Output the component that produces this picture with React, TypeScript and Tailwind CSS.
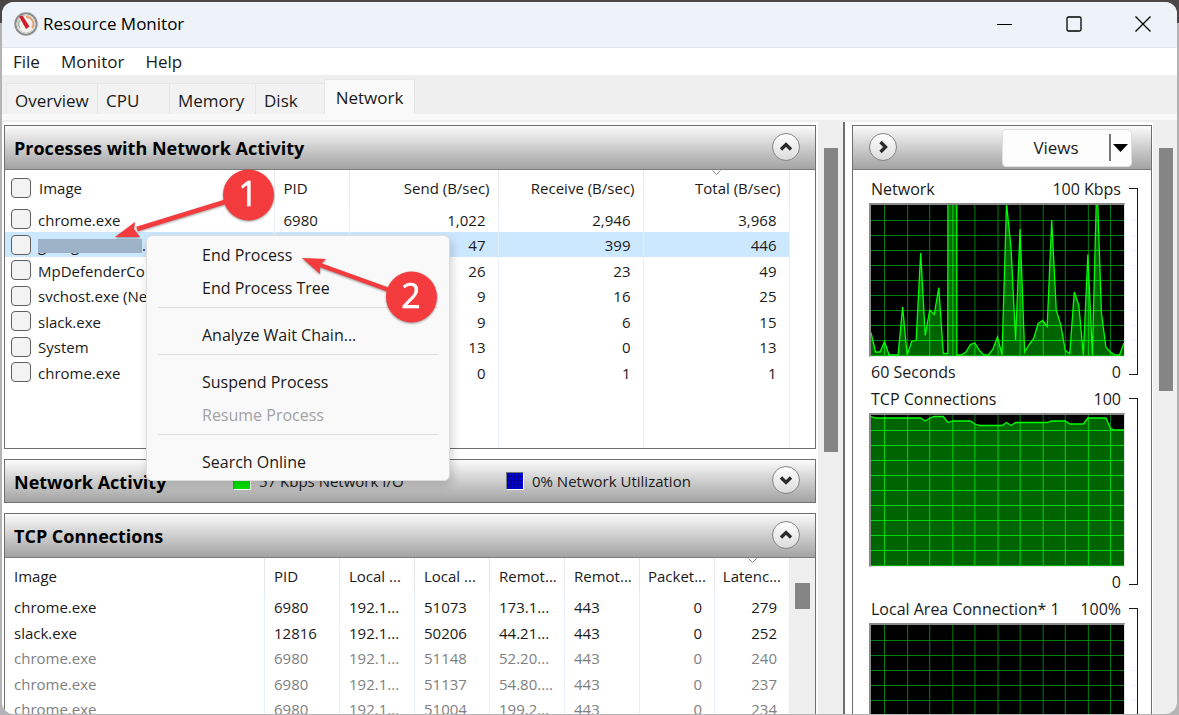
import React from 'react';
import { ChevronDown, ChevronRight, ChevronUp } from 'lucide-react';
import clsx from 'clsx';

const processes = [
  { name: 'chrome.exe', pid: '6980', send: '1,022', receive: '2,946', total: '3,968' },
  { name: '', pid: '', send: '47', receive: '399', total: '446', selected: true },
  { name: 'MpDefenderCo', pid: '', send: '26', receive: '23', total: '49' },
  { name: 'svchost.exe (Ne', pid: '', send: '9', receive: '16', total: '25' },
  { name: 'slack.exe', pid: '', send: '9', receive: '6', total: '15' },
  { name: 'System', pid: '', send: '13', receive: '0', total: '13' },
  { name: 'chrome.exe', pid: '', send: '0', receive: '1', total: '1' },
];

const connections = [
  { cells: ['chrome.exe', '6980', '192.1...', '51073', '173.1...', '443', '0', '279'], active: true },
  { cells: ['slack.exe', '12816', '192.1...', '50206', '44.21...', '443', '0', '252'], active: true },
  { cells: ['chrome.exe', '6980', '192.1...', '51148', '52.20...', '443', '0', '240'], active: false },
  { cells: ['chrome.exe', '6980', '192.1...', '51137', '54.80....', '443', '0', '237'], active: false },
  { cells: ['chrome.exe', '6980', '192.1...', '51004', '199.2...', '443', '0', '234'], active: false },
];

const connectionHeads = ['Image', 'PID', 'Local ...', 'Local ...', 'Remot...', 'Remot...', 'Packet...', 'Latenc...'];

// one sample per second, in percent of the scale
const networkSamples = [
  15, 2, 2, 9, 0, 0, 0, 32, 0, 9, 10, 68, 13, 30, 27, 45, 1, 1, 5000, 0, 0, 2, 7, 8, 3, 0, 0, 4, 12,
  0, 101, 71, 10, 84, 2, 7, 11, 21, 23, 19, 90, 30, 20, 3, 1, 42, 33, 0, 67, 0, 118, 28, 5, 2, 0, 0, 8,
];
const tcpSamples = [
  99, 98, 98, 98, 98, 98, 98, 98, 98, 98, 98, 98, 96, 98, 99, 99, 99, 95, 96, 96, 96, 96, 96, 94, 93,
  93, 93, 93, 93, 93, 95, 93, 95, 95, 95, 95, 95, 95, 95, 95, 96, 96, 96, 96, 94, 94, 94, 94, 98, 98,
  98, 98, 98, 91, 90, 90, 90,
];

const menuGroups = [
  [{ label: 'End Process' }, { label: 'End Process Tree' }],
  [{ label: 'Analyze Wait Chain...' }],
  [{ label: 'Suspend Process' }, { label: 'Resume Process', disabled: true }],
  [{ label: 'Search Online' }],
];

const headerBar = 'flex h-11 items-center bg-linear-to-b from-[#fbfbfb] to-[#a3a3a3] pl-[9px] pr-[15px]';

function RoundButton({ icon: Icon, label }: { icon: any; label: string }) {
  return (
    <button
      aria-label={label}
      className="mb-[2px] flex h-7 w-7 shrink-0 items-center justify-center rounded-full border border-[#858585] bg-linear-to-b from-white to-[#dcdcdc]"
    >
      <Icon className="h-5 w-5 text-[#2b2b2b]" strokeWidth={4} strokeLinecap="butt" strokeLinejoin="miter" />
    </button>
  );
}

function Check({ id, label }: { id: string; label: string }) {
  return (
    <input
      id={id}
      type="checkbox"
      aria-label={label}
      className="h-5 w-5 shrink-0 appearance-none rounded border border-[#5f5f5f] bg-[#f3f3f3]"
    />
  );
}

function SortMark() {
  return (
    <svg className="absolute left-1/2 top-0 -ml-1 h-[6px] w-[9px]" viewBox="0 0 9 6" fill="none" stroke="#8a8a8a">
      <path d="M0.5 0.5L4.5 4.5L8.5 0.5" />
    </svg>
  );
}

// process name with a strip painted over it, only the tails of the letters show
function HiddenName() {
  return (
    <span className="relative flex h-6 w-[108px] items-center justify-between">
      <span>g</span>
      <span>g</span>
      <span className="w-[6px]" />
      <span>s.</span>
      <span className="absolute left-0 top-[6px] h-[14px] w-[104px] bg-[#9fb3c8]" />
    </span>
  );
}

function Plot({ id, samples }: { id: string; samples?: number[] }) {
  const line = samples?.map((v, i) => `${i * 4.5},${150 - v * 1.5}`).join(' ');
  let grid = '';
  for (let i = 0; i < 11; i++) grid += `M${Math.round(13 + i * 22.5) + 0.5} 0V151`;
  for (let i = 1; i < 10; i++) grid += `M0 ${i * 15 + 0.5}H252`;

  return (
    <div className="h-[154px] border-b border-l-2 border-r border-t-2 border-b-[#e3e3e3] border-l-[#8a8a8a] border-r-[#e3e3e3] border-t-[#8a8a8a] bg-black">
      <svg className="block h-full w-full" viewBox="0 0 252 151" preserveAspectRatio="none" fill="none">
        <path d={grid} stroke="#00800f" />
        {line && (
          <>
            <clipPath id={id}>
              <polygon points={`0,151 ${line} 252,151`} />
            </clipPath>
            <polygon points={`0,151 ${line} 252,151`} fill="#006400" />
            <path d={grid} stroke="#00d60c" clipPath={`url(#${id})`} />
            <path d="M0 150.5H252" stroke="#00b40a" />
            <polyline points={line} stroke="#00ff00" strokeWidth="1.3" />
          </>
        )}
      </svg>
    </div>
  );
}

type GraphProps = { id: string; title: string; scale: string; span?: string; samples?: number[] };

function Graph({ id, title, scale, span, samples }: GraphProps) {
  return (
    <section className="flex gap-1 pl-4 pr-[13px]">
      <div className="min-w-0 flex-1">
        <div className="flex h-7 items-center justify-between pl-[2px] pr-1">
          <span>{title}</span>
          <span>{scale}</span>
        </div>
        <Plot id={id} samples={samples} />
        <div className="flex h-7 items-center justify-between pl-[2px] pr-1 pt-[2px]">
          <span>{span}</span>
          <span>0</span>
        </div>
      </div>
      <div className="mb-[10px] mt-[13px] w-[9px] border-y border-r border-[#1a1a1a]" />
    </section>
  );
}

function ContextMenu() {
  return (
    <div
      role="menu"
      className="absolute left-[144px] top-[233px] w-[304px] rounded-md border border-[#dedede] bg-[#f9f9f9] pb-[2px] pt-[2px] shadow-[2px_4px_10px_rgba(0,0,0,0.18)]"
    >
      {menuGroups.map((group, i) => (
        <div key={i}>
          {i > 0 && <div className="mx-[11px] mb-[10px] mt-[3px] h-px bg-[#dedede]" />}
          {group.map((item: any) => (
            <button
              key={item.label}
              role="menuitem"
              disabled={item.disabled}
              className="flex h-[33px] w-full items-center pl-[55px] pt-px disabled:text-[#a3a3a3]"
            >
              {item.label}
            </button>
          ))}
        </div>
      ))}
    </div>
  );
}

function Callouts() {
  return (
    <svg
      className="pointer-events-none absolute left-[100px] top-[160px] h-[180px] w-[350px] drop-shadow-[0_1px_1px_rgba(0,0,0,0.4)]"
      viewBox="102 162 350 180"
      fill="#f43b3e"
    >
      <path d="M228 201L137 229" stroke="#f43b3e" strokeWidth="4.500" />
      <path d="M115 237L135 222L134 229L140 237Z" />
      <circle cx="248.500" cy="195" r="25.500" />
      <path d="M392 291L320 265" stroke="#f43b3e" strokeWidth="4.500" />
      <path d="M302 258L326 259L320 265L320 274Z" />
      <circle cx="411.500" cy="297" r="25.500" />
      <g fill="#fff" stroke="#fff" strokeWidth="0.600" fontFamily="Open Sans, sans-serif" fontSize="34" fontWeight="500" textAnchor="middle">
        <text x="248" y="206">1</text>
        <text x="411" y="308">2</text>
      </g>
    </svg>
  );
}

export default function App() {
  return (
    <div className="h-screen overflow-hidden bg-[linear-gradient(#4b4747_0_23px,#b4b4b4_23px)] px-[2px] pb-px pt-[2px] font-['Open_Sans',sans-serif] text-[16px] leading-6 text-[#1a1a1a]">
      <div className="relative flex h-full flex-col overflow-hidden rounded-xl bg-[#efefef]">
        <header className="flex h-[46px] shrink-0 items-center border-b border-[#e2e5e9] bg-[#eef3f9] pb-[2px] pl-3 text-black">
          <svg className="h-6 w-6" viewBox="0 0 24 24" fill="none">
            <circle cx="12" cy="12" r="10.700" fill="#f2f1ee" stroke="#8d8d8d" strokeWidth="2" />
            <circle cx="12" cy="12" r="9" stroke="#c9c9c9" />
            <path d="M6 16A7 7 0 0 1 6 8" stroke="#a8c0a0" strokeWidth="1.500" />
            <path d="M12 5A7 7 0 0 1 18 16" stroke="#e9a06c" strokeWidth="1.800" />
            <path d="M5 4.500L8.500 3.500L15.500 14.500L12 17Z" fill="#cf1f2c" />
          </svg>
          <h1 className="ml-[5px] text-[17px]">Resource Monitor</h1>
          <div className="ml-auto flex h-full">
            <button aria-label="Minimize" className="flex w-[69px] items-center justify-center">
              <svg width="16" height="16" stroke="currentColor"><path d="M0 8.500H15" /></svg>
            </button>
            <button aria-label="Maximize" className="flex w-[69px] items-center justify-center">
              <svg width="16" height="16" stroke="currentColor" fill="none">
                <rect x="1" y="1" width="14" height="14" rx="1.500" strokeWidth="1.300" />
              </svg>
            </button>
            <button aria-label="Close" className="flex w-[69px] items-center justify-center">
              <svg width="16" height="16" stroke="currentColor" strokeWidth="1.300"><path d="M0.500 0.500L15.500 15.500M15.500 0.500L0.500 15.500" /></svg>
            </button>
          </div>
        </header>

        <nav className="flex h-[27px] shrink-0 items-center gap-[21px] bg-white pl-[11px] text-[17px]">
          <button>File</button>
          <button>Monitor</button>
          <button>Help</button>
        </nav>

        <div role="tablist" className="flex h-[39px] shrink-0 items-end pl-1 text-[17px]">
          {[
            ['Overview', 'w-[91px]'],
            ['CPU', 'w-[72px]'],
            ['Memory', 'w-[86px]'],
            ['Disk', 'w-[69px]'],
          ].map(([name, width]) => (
            <button key={name} role="tab" className={clsx('h-[31px] border-l border-t border-[#e6e6e6] bg-[#f2f2f2] pl-[8px] pt-[4px] text-left', width)}>
              {name}
            </button>
          ))}
          <button role="tab" aria-selected="true" className="h-[35px] w-[91px] border-x border-t border-[#e6e6e6] bg-[#f9f9f9] pt-px">
            Network
          </button>
        </div>
        <div className="h-[6px] shrink-0 bg-[#f9f9f9]" />

        <main className="mr-[2px] mt-[2px] flex min-h-0 flex-1">
          {/* Left column: the three collapsible panels */}
          <div className="min-w-0 flex-1 overflow-hidden bg-white pl-[2px] pr-[2px] pt-[3px]">
            <section className="border border-[#6f6f6f]">
              <div className={clsx(headerBar, 'border-b border-[#7d7d7d]')}>
                <h2 className="flex-1 pt-px text-[18px] font-bold text-black">Processes with Network Activity</h2>
                <RoundButton icon={ChevronUp} label="Collapse processes" />
              </div>
              <table className="w-full table-fixed border-collapse text-[15px]">
                <colgroup>
                  <col />
                  <col className="w-[75px]" />
                  <col className="w-[149px]" />
                  <col className="w-[145px]" />
                  <col className="w-[146px]" />
                  <col className="w-[26px]" />
                </colgroup>
                <thead>
                  <tr className="h-9 *:border-r *:border-[#e8e8e8] *:p-0 *:font-normal">
                    <th>
                      <div className="flex items-center gap-2 pl-[6px]">
                        <Check id="all" label="Select all" />
                        <label htmlFor="all">Image</label>
                      </div>
                    </th>
                    <th><div className="pl-[9px] text-left">PID</div></th>
                    <th><div className="pr-2 text-right">Send (B/sec)</div></th>
                    <th><div className="pr-2 text-right">Receive (B/sec)</div></th>
                    <th className="relative"><SortMark /><div className="pr-2 text-right">Total (B/sec)</div></th>
                    <td className="border-r-0!" />
                  </tr>
                </thead>
                <tbody>
                  {processes.map((p, i) => (
                    <tr key={i} className={clsx('h-[25px] odd:h-[26px] *:border-r *:border-[#e6f0fb] *:p-0', p.selected && '*:not-last:bg-[#cce8ff]')}>
                      <td>
                        <div className="flex h-[25px] items-center gap-[7px] overflow-hidden pl-[6px]">
                          <Check id={`p${i}`} label={p.name || 'Selected process'} />
                          {p.selected ? (
                            <HiddenName />
                          ) : (
                            <label htmlFor={`p${i}`} className="whitespace-nowrap pt-px">{p.name}</label>
                          )}
                        </div>
                      </td>
                      <td><div className="pl-[9px] pt-px">{p.pid}</div></td>
                      <td><div className="pr-3 pt-px text-right">{p.send}</div></td>
                      <td><div className="pr-3 pt-px text-right">{p.receive}</div></td>
                      <td><div className="pr-3 pt-px text-right">{p.total}</div></td>
                      <td className="border-r-0!" />
                    </tr>
                  ))}
                  <tr className="h-[63px] *:border-r *:border-[#e6f0fb]">
                    <td /><td /><td /><td /><td /><td className="border-r-0!" />
                  </tr>
                </tbody>
              </table>
            </section>

            <section className="mt-[10px] border border-[#6f6f6f]">
              <div className={clsx(headerBar, 'h-[42px]!')}>
                <h2 className="w-[219px] pt-[2px] text-[18px] font-bold text-black">Network Activity</h2>
                <div className="flex w-[273px] items-center gap-2 text-[15px]">
                  <span className="h-[18px] w-[18px] border border-b-white border-l-[#777] border-r-white border-t-[#777] bg-[#00e400]" />
                  57 Kbps Network I/O
                </div>
                <div className="flex flex-1 items-center gap-2 text-[15px]">
                  <svg className="h-[18px] w-[18px] border border-b-white border-l-[#777] border-r-white border-t-[#777] bg-[#0000e6]" viewBox="0 0 16 16" stroke="#000090">
                    <path d="M3.500 0V16M7.500 0V16M11.500 0V16M0 3.500H16M0 7.500H16M0 11.500H16" />
                  </svg>
                  0% Network Utilization
                </div>
                <RoundButton icon={ChevronDown} label="Expand network activity" />
              </div>
            </section>

            <section className="mt-[10px] border border-[#6f6f6f]">
              <div className={clsx(headerBar, 'border-b border-[#7d7d7d]')}>
                <h2 className="flex-1 text-[18px] font-bold text-black">TCP Connections</h2>
                <RoundButton icon={ChevronUp} label="Collapse TCP connections" />
              </div>
              <div className="flex text-[15px]">
                <table className="min-w-0 flex-1 table-fixed border-collapse">
                  <colgroup>
                    <col />
                    {connectionHeads.slice(1).map((_, i) => <col key={i} className="w-[75px]" />)}
                  </colgroup>
                  <thead>
                    <tr className="h-9 *:border-r *:border-[#e8e8e8] *:p-0 *:font-normal">
                      {connectionHeads.map((head, i) => (
                        <th key={i} className="relative">
                          {i === 7 && <SortMark />}
                          <div className={i > 5 ? 'pr-2 text-right' : 'pl-[9px] text-left'}>{head}</div>
                        </th>
                      ))}
                    </tr>
                  </thead>
                  <tbody>
                    {connections.map((row, i) => (
                      <tr key={i} className={clsx('h-[25px] odd:h-[26px] *:border-r *:border-[#e6f0fb] *:p-0', !row.active && 'text-[#808080]')}>
                        {row.cells.map((cell, j) => (
                          <td key={j}>
                            <div className={j > 5 ? 'pr-3 text-right' : 'pl-[9px]'}>{cell}</div>
                          </td>
                        ))}
                      </tr>
                    ))}
                  </tbody>
                </table>
                <div className="w-[25px] bg-[#efefef] pl-[5px] pt-[25px]">
                  <div className="h-[26px] w-[15px] bg-[#858585]" />
                </div>
              </div>
            </section>
          </div>

          <div className="w-[25px] pl-[6px] pt-[26px]">
            <div className="h-[304px] w-[14px] bg-[#858585]" />
          </div>

          {/* Right column: graphs */}
          <div className="flex w-[332px] border-l-2 border-[#6f6f6f]">
            <div className="flex-1 overflow-hidden bg-white pl-[7px] pr-px pt-[3px]">
              <div className="border border-[#6f6f6f]">
                <div className={clsx(headerBar, 'justify-between border-b border-[#7d7d7d] pr-[19px]! pl-4!')}>
                  <RoundButton icon={ChevronRight} label="Hide graphs" />
                  <button className="flex h-[38px] w-[130px] items-center rounded-sm border border-[#e0e0e0] bg-[#fdfdfd] pr-[3px] text-[17px]">
                    <span className="flex-1">Views</span>
                    <span className="h-[27px] w-[2px] bg-[#777]" />
                    <svg className="ml-[2px]" width="15" height="8"><path d="M0 0H15L7.500 8Z" fill="#000" /></svg>
                  </button>
                </div>
                <div className="pt-[5px]">
                  <Graph id="net" title="Network" scale="100 Kbps" span="60 Seconds" samples={networkSamples} />
                  <Graph id="tcp" title="TCP Connections" scale="100" samples={tcpSamples} />
                  <Graph id="lan" title="Local Area Connection* 1" scale="100%" />
                </div>
              </div>
            </div>
            <div className="w-[22px] pl-[6px] pt-[26px]">
              <div className="h-[243px] w-[14px] bg-[#858585]" />
            </div>
          </div>
        </main>

        <ContextMenu />
        <Callouts />
      </div>
    </div>
  );
}
